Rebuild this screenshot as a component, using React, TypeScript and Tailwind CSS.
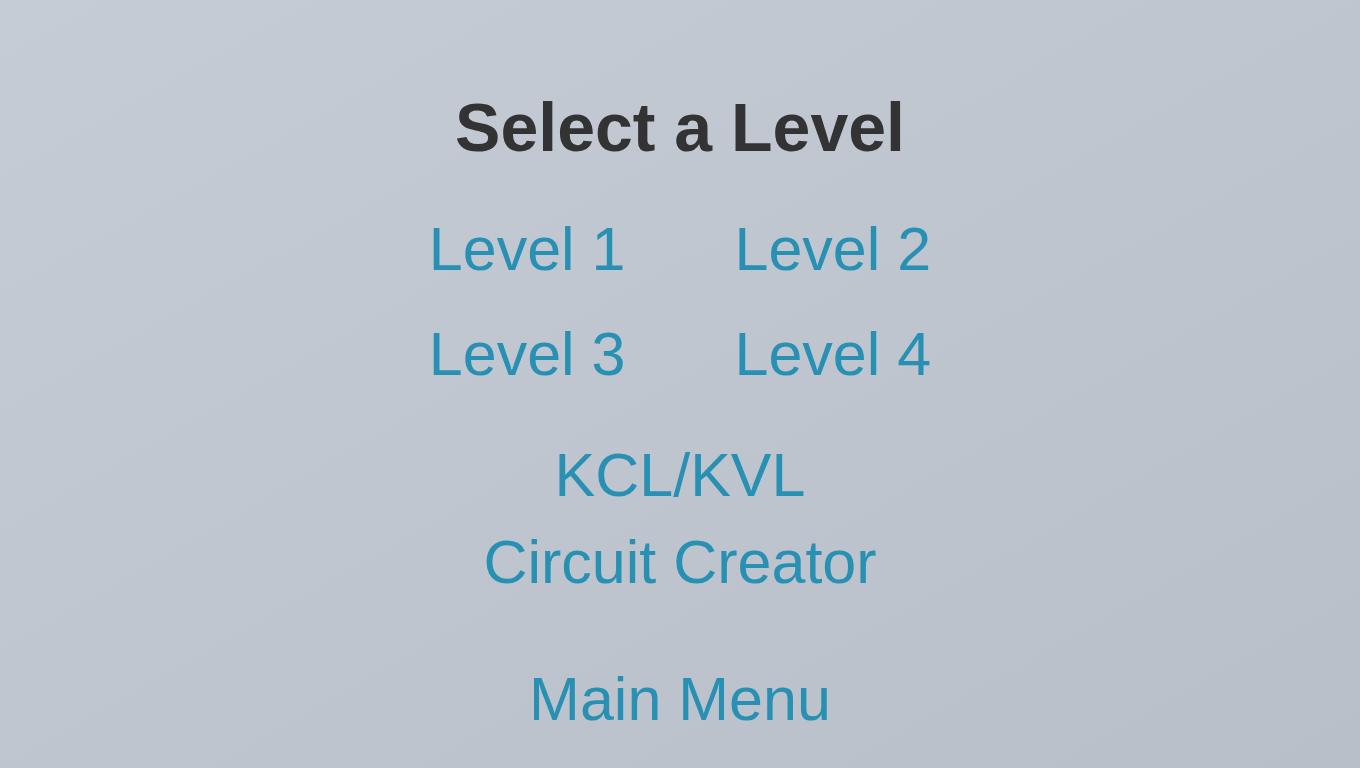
import React from "react";

const levels = ["Level 1", "Level 2", "Level 3", "Level 4"];

const MenuLink: React.FC<{ label: string; className?: string }> = ({
  label,
  className = "",
}) => (
  <button
    type="button"
    className={`text-[61px] leading-none text-[#2790b3] hover:text-[#1f6f8c] cursor-pointer ${className}`}
  >
    {label}
  </button>
);

const App: React.FC = () => {
  return (
    <div
      className="min-h-screen w-full bg-linear-to-br from-[#c6ccd5] to-[#b8bfc9] flex flex-col items-center pt-[93px]"
      style={{ fontFamily: '"Liberation Sans", Arial, sans-serif' }}
    >
      {/* Title */}
      <h1 className="text-[68px] leading-none font-bold text-[#333333]">
        Select a Level
      </h1>

      {/* Level grid */}
      <div className="grid grid-cols-2 gap-x-[109px] gap-y-[44px] mt-[58px]">
        {levels.map((lvl) => (
          <MenuLink key={lvl} label={lvl} className="text-left" />
        ))}
      </div>

      {/* Extra modes */}
      <MenuLink label="KCL/KVL" className="mt-[60px]" />
      <MenuLink label="Circuit Creator" className="mt-[26px]" />

      <MenuLink label="Main Menu" className="mt-[76px]" />
    </div>
  );
};

export default App;
